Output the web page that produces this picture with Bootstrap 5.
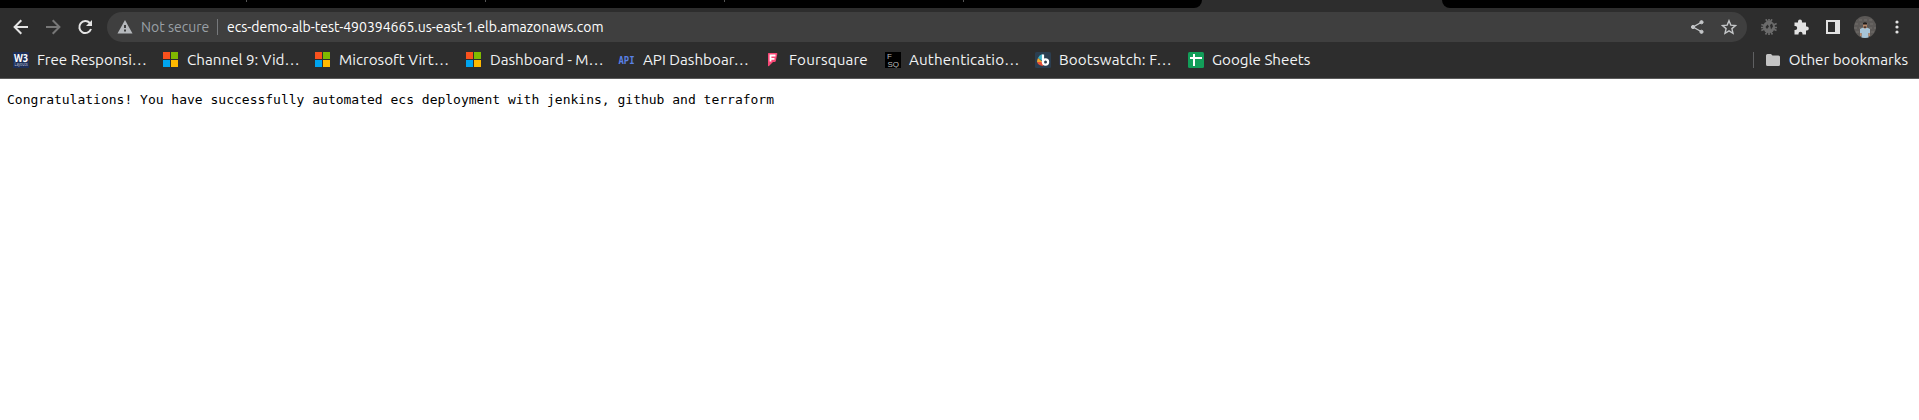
<!DOCTYPE html>
<html lang="en">
<head>
<meta charset="utf-8">
<meta name="viewport" content="width=device-width, initial-scale=1">
<title>ecs-demo-alb-test</title>
<link href="https://cdn.jsdelivr.net/npm/bootstrap@5.3.0/dist/css/bootstrap.min.css" rel="stylesheet">
<style>
body{background:#fff;overflow:hidden;font-family:Ubuntu,"Noto Sans",sans-serif}
svg{display:block;flex:none}
.chrome{background:#2d2d2d;border-bottom:1px solid #5a5a5a;height:79px}
.tabstrip{height:8px}
.tabs-l{width:1202px;background:#000;border-bottom-right-radius:8px}
.tabs-l i{width:1px;height:2px;background:#555;margin-left:238px}
.tabs-l i:first-child{margin-left:246px}
.tabs-r{margin-left:240px;background:#000;border-bottom-left-radius:8px}
.tools{height:38px;padding:0 14px 0 13px}
.omni{height:30px;width:1640px;background:#3f3f3f;margin-left:14px;margin-right:14px;padding:0 10px}
.addr{font-size:14px;line-height:20px;white-space:nowrap}
.state{width:76px;margin-left:8px;color:#9aa0a6}
.url{margin-left:9px;color:#fff}
.sep{width:1px;height:16px;background:#77797c}
.marks{height:32px;padding:0 11px 4px 13px}
.mark-grid{display:grid;grid-template-columns:150px 152px 151px 152px 147px 120px 150px 153px 140px}
.bm{gap:8px;color:#f1f3f4;font-size:15.200px;line-height:20px;white-space:nowrap}
.bm-wide{letter-spacing:.15px}
.mark-sep{margin-right:12px;background:#5f6062}
.menu-dots{margin-left:13px}
.msg{font:13px/16px "DejaVu Sans Mono",monospace;margin:13px 0 0 7px;color:#000}
</style>
</head>
<body>
<header class="chrome">
<div class="tabstrip d-flex"><div class="tabs-l d-flex"><i></i><i></i><i></i><i></i></div><div class="tabs-r flex-grow-1"></div></div>
<div class="tools d-flex align-items-center">
<svg class="me-3" width="16" height="16" fill="none" stroke="#e4e4e4" stroke-width="2"><path d="M15 8H2M8.300 1.300L1.600 8l6.700 6.700"/></svg>
<svg class="me-3" width="16" height="16" fill="none" stroke="#777" stroke-width="2"><path d="M1 8h13M7.700 1.300L14.400 8l-6.700 6.700"/></svg>
<svg width="16" height="16" fill="none" stroke="#e4e4e4" stroke-width="2"><path d="M14 10A6 6 0 1 1 12.800 4"/><path fill="#e4e4e4" stroke="none" d="M15 1v6H9z"/></svg>
<div class="omni rounded-pill d-flex align-items-center">
<svg width="16" height="16"><path fill="#b5b8bc" d="M8 1l7.500 13.500H.5z"/><path fill="#3f3f3f" d="M7 6h2v3H7zM7 10.500h2v2H7z"/></svg>
<span class="addr state">Not secure</span><span class="sep"></span>
<span class="addr url">ecs-demo-alb-test-490394665.us-east-1.elb.amazonaws.com</span>
<svg class="ms-auto" width="16" height="16" fill="#c4c6c8" stroke="#c4c6c8"><path fill="none" stroke-width="1.400" d="M13 3L4 8l9 5"/><circle cx="12.500" cy="3.200" r="1.600"/><circle cx="4" cy="8" r="1.600"/><circle cx="12.500" cy="12.800" r="1.600"/></svg>
<svg class="ms-3" width="16" height="16" fill="none" stroke="#c4c6c8" stroke-width="1.400"><path d="M8 1.700l1.800 4.400 4.700.4-3.600 3.100 1.100 4.700L8 11.800l-4 2.500 1.100-4.700-3.600-3.100 4.700-.4z"/></svg>
</div>
<svg width="16" height="16" viewBox="0 0 16 16"><path d="M4.800.3L8 5l3-4.700M.3 5.500L8 8l7.700-3.500M.3 11.500L8 8l7.500 3.500M4.500 15.500L8 10l3.500 5.500M0 8.500h16M8 0v16" fill="none" stroke="#6b6b6b" stroke-width="1.700"/><circle cx="8" cy="8" r="6" fill="#6b6b6b"/><path d="M4.500 8l2-2.500 1.500 2L6 10zM9 6l2-1.500 1 3-2 3z" fill="#2d2d2d"/></svg>
<svg class="ms-3" width="16" height="16" viewBox="0 0 16 16"><path fill="#e2e2e2" d="M1.500 3.500H5V2.600a2 2 0 0 1 4 0v.9h4v4h.8a2 2 0 0 1 0 4H13v4H9.500v-.7a2 2 0 0 0-4 0v.7h-4V11h.7a2 2 0 0 0 0-4h-.7z"/></svg>
<svg class="ms-3" width="16" height="16"><path fill="#e2e2e2" fill-rule="evenodd" d="M1 1h14v14H1zM3 3v10h7V3z"/></svg>
<svg class="ms-auto" width="22" height="22" viewBox="0 0 22 22"><defs><clipPath id="face"><circle cx="11" cy="11" r="11"/></clipPath></defs><g clip-path="url(#face)"><path fill="#5c5957" d="M0 0h22v22H0z"/><path stroke="#73706d" stroke-dasharray="3 2" d="M0 4h22M1 8h22M0 12h22M2 16h22"/><path fill="#a8c5d8" d="M6 13l3-1.500h4L16 13v4h-1.500v5h-7v-5H6z"/><path fill="#b88a6c" d="M9 8h4v3.500L11 13l-2-1.500zM6 17h1.500v3H6zM14.500 17H16v3h-1.500z"/><path fill="#211d1b" d="M9 8.500V7q2-1.600 4 0v1.500zM9.700 10.500h2.600v1.200H9.700z"/></g></svg>
<svg class="menu-dots" width="16" height="16" fill="#e2e2e2"><circle cx="8" cy="3" r="1.600"/><circle cx="8" cy="8" r="1.600"/><circle cx="8" cy="13" r="1.600"/></svg>
</div>
<nav class="marks d-flex align-items-center">
<div class="mark-grid">
<div class="bm d-flex align-items-center"><svg width="16" height="16"><path fill="#1d2e58" d="M0 0h16v16H0z"/><text x="1" y="9.500" font-family="Open Sans" font-size="11" font-weight="700" textLength="14" lengthAdjust="spacingAndGlyphs" fill="#fff">W3</text><text x="1.500" y="14" font-size="4.500" textLength="13" lengthAdjust="spacingAndGlyphs" fill="#c5cbda">Layouts</text></svg><span>Free Responsi…</span></div>
<div class="bm d-flex align-items-center"><svg width="16" height="16"><path fill="#f9511d" d="M0 0h7v7H0z"/><path fill="#7fba00" d="M8 0h7v7H8z"/><path fill="#00a4ef" d="M0 8h7v7H0z"/><path fill="#ffb900" d="M8 8h7v7H8z"/></svg><span>Channel 9: Vid…</span></div>
<div class="bm d-flex align-items-center"><svg width="16" height="16"><path fill="#f9511d" d="M0 0h7v7H0z"/><path fill="#7fba00" d="M8 0h7v7H8z"/><path fill="#00a4ef" d="M0 8h7v7H0z"/><path fill="#ffb900" d="M8 8h7v7H8z"/></svg><span>Microsoft Virt…</span></div>
<div class="bm d-flex align-items-center"><svg width="16" height="16"><path fill="#f9511d" d="M0 0h7v7H0z"/><path fill="#7fba00" d="M8 0h7v7H8z"/><path fill="#00a4ef" d="M0 8h7v7H0z"/><path fill="#ffb900" d="M8 8h7v7H8z"/></svg><span>Dashboard - M…</span></div>
<div class="bm d-flex align-items-center"><svg width="17" height="16"><text x="0.500" y="12" font-family="DejaVu Sans Mono" font-size="10.500" font-weight="700" textLength="16" lengthAdjust="spacingAndGlyphs" fill="#5a80e6">API</text></svg><span>API Dashboar…</span></div>
<div class="bm bm-wide d-flex align-items-center"><svg width="16" height="16"><path fill="#f94877" d="M3.500 1h8q1 0 .8 1l-1.500 7q-.2 1-1.200 1H8l-4 4q-1 .5-1-.5V2q0-1 .5-1z"/><path fill="none" stroke="#fff" stroke-width="1.800" d="M10.500 3.500H5.500v6M5.500 6.800h4"/></svg><span>Foursquare</span></div>
<div class="bm bm-wide d-flex align-items-center"><svg width="16" height="16"><path d="M0 0h16v16H0z"/><text x="2" y="7" font-family="Liberation Sans" font-size="8" fill="#bbb">F</text><text x="2.500" y="14.500" font-family="Liberation Sans" font-size="8" textLength="11.500" fill="#bbb">SQ</text></svg><span>Authenticatio…</span></div>
<div class="bm bm-wide d-flex align-items-center"><svg width="16" height="16"><rect width="16" height="16" rx="1.500" fill="#2b3e50"/><path fill="#3eb1c8" d="M7.500 2v7L3 6q1-3 4.500-4z"/><path fill="#f0a830" d="M3 6l4.500 4H2q0-2 1-4z"/><path fill="#e8503a" d="M2 10h6v4q-5-.5-6-4z"/><path fill="none" stroke="#fff" stroke-width="2.200" d="M8 2.500v8"/><circle cx="10.500" cy="10" r="2.600" fill="none" stroke="#fff" stroke-width="2.200"/></svg><span>Bootswatch: F…</span></div>
<div class="bm d-flex align-items-center"><svg width="16" height="16"><rect width="16" height="16" rx="1.500" fill="#129e59"/><path fill="#fff" d="M5 2h2v3h7v2H7v7H5V7H2V5h3z"/></svg><span>Google Sheets</span></div>
</div>
<div class="ms-auto d-flex align-items-center"><span class="sep mark-sep"></span><div class="bm d-flex align-items-center"><svg width="15" height="16"><path fill="#c3c3c3" d="M0 3.500Q0 2 1.500 2H5l1.500 1.500h6q1.500 0 1.500 1.500v7.500q0 1.500-1.500 1.500h-11Q0 14 0 12.500z"/></svg><span>Other bookmarks</span></div></div>
</nav>
</header>
<pre class="msg">Congratulations! You have successfully automated ecs deployment with jenkins, github and terraform</pre>
<script src="https://cdn.jsdelivr.net/npm/bootstrap@5.3.0/dist/js/bootstrap.bundle.min.js"></script>
</body>
</html>
